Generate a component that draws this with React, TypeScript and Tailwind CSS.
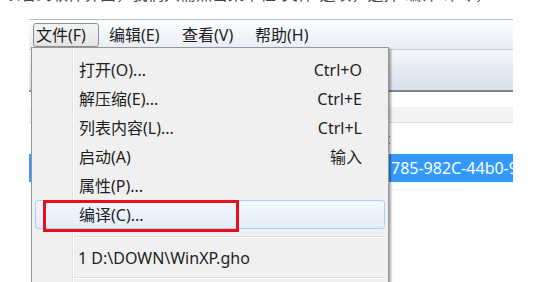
import React from "react";

const font = "font-['Noto_Sans','Noto_Sans_CJK_SC',sans-serif]";

type Item = { label: string; key?: string; hot?: boolean };

const items: Item[] = [
  { label: "打开(O)...", key: "Ctrl+O" },
  { label: "解压缩(E)...", key: "Ctrl+E" },
  { label: "列表内容(L)...", key: "Ctrl+L" },
  { label: "启动(A)", key: "输入" },
  { label: "属性(P)..." },
  { label: "编译(C)...", hot: true },
];

const menus = ["文件(F)", "编辑(E)", "查看(V)", "帮助(H)"];

const Separator = ({ top }: { top: string }) => (
  <div className={`ml-[41px] mr-[4px] ${top} border-t border-[#dcdcdc] border-b border-b-white`} />
);

const FileMenu = () => (
  <div className="absolute left-[2px] top-[28px] h-[250px] w-[358px] border border-[#979797] bg-[#f0f0f0] pt-[7px] shadow-[2px_2px_2px_rgba(0,0,0,0.35)]">
    {/* gutter */}
    <div className="absolute bottom-0 left-[40px] top-0 w-[2px] border-l border-[#e2e3e3] border-r border-r-white" />
    {items.map((item) => (
      <div
        key={item.label}
        className={`relative mx-[3px] flex h-[29px] items-center justify-between rounded-[3px] border pl-[43px] pr-[22px] text-[16px] text-[#1e1e1e] ${
          item.hot
            ? "border-[#aecff7] bg-gradient-to-b from-[#f2f7fd] to-[#e3edfa]"
            : "border-transparent"
        }`}
      >
        <span>{item.label}</span>
        {item.key && <span>{item.key}</span>}
        {item.hot && (
          <div className="absolute -top-[1px] left-[7px] h-[32px] w-[196px] border-[3px] border-[#e8101a]" />
        )}
      </div>
    ))}
    <Separator top="mt-[7px]" />
    <div className="relative mx-[3px] mt-[5px] flex h-[29px] items-center pl-[43px] text-[16px] text-[#1e1e1e]">
      1 D:\DOWN\WinXP.gho
    </div>
    <Separator top="mt-[5px]" />
  </div>
);

export default function App() {
  return (
    <div className={`relative h-[282px] w-[544px] overflow-hidden bg-white ${font}`}>
      <div className="h-[8px] overflow-hidden">
        <div className="-mt-[17px] whitespace-nowrap pl-[4px] text-[16px] leading-[22px] text-[#444]">
          以看到软件界面，我们只需点击菜单栏“文件”选项，选择“编译”命令，
        </div>
      </div>

      <div className="relative ml-[29px] mt-[11px] w-[484px]">
        {/* menu bar */}
        <div className="flex h-[30px] border-t border-[#aebdd0] bg-gradient-to-b from-[#fdfeff] to-[#e7ecf4] pl-[4px] pt-[3px] text-[16px] text-[#1e1e1e]">
          {menus.map((m, i) => (
            <div key={m} className="w-[73px] shrink-0">
              <div
                className={`flex h-[24px] w-[66px] items-center rounded-[3px] border pl-[2px] ${
                  i === 0
                    ? "border-[#8e8f8f] bg-gradient-to-b from-[#f4f4f4] to-[#e4e4e4]"
                    : "border-transparent"
                }`}
              >
                {m}
              </div>
            </div>
          ))}
        </div>

        {/* toolbar */}
        <div className="h-[41px] border-t border-[#c3ccd8] bg-gradient-to-b from-[#f5f7fa] via-[#e4eaf2] to-[#d9e1eb]" />
        <div className="h-[2px] bg-[#80868f]" />
        <div className="h-[15px] bg-white" />
        <div className="h-[16px] border-b border-[#dedede] bg-[#f3f3f3]" />
        <div className="flex h-[31px] items-center bg-white text-[15px] text-[#444]">
          <div className="w-[361px] shrink-0 text-right">t</div>
        </div>
        <div className="flex h-[28px] items-center bg-[#3399ff] text-[16px] text-white">
          <div className="w-[362px] shrink-0" />
          <span className="whitespace-nowrap">785-982C-44b0-9</span>
        </div>
        <div className="flex h-[14px] items-center bg-white text-[10px] text-[#eeeeee]">
          <div className="w-[362px] shrink-0" />
          <span className="whitespace-nowrap">···························</span>
        </div>
        <div className="h-[100px] bg-white" />

        <FileMenu />
      </div>
    </div>
  );
}
